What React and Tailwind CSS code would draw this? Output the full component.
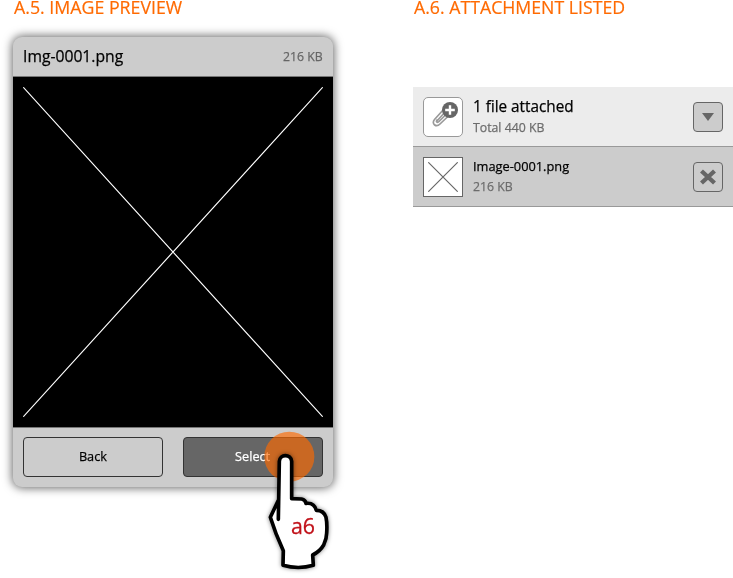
function CrossLines({ className, w, h }) {
  return (
    <svg className={className} viewBox={`0 0 ${w} ${h}`} fill="none" stroke="currentColor">
      <path d={`M0.3 0.3L${w - 0.3} ${h - 0.3}M${w - 0.3} 0.3L0.3 ${h - 0.3}`} strokeWidth="1.15" />
    </svg>
  );
}

function Title({ children, className }) {
  return (
    <h2 className="h-[37px] pl-px text-[19px] leading-[15px] text-[#ff6a00] [-webkit-text-stroke:0.2px]">
      <span className={`inline-block origin-left whitespace-nowrap ${className}`}>{children}</span>
    </h2>
  );
}

function PreviewPanel() {
  return (
    <div className="flex h-[450px] w-[320px] flex-col overflow-hidden rounded-[9px] bg-[#ccc] shadow-[0_0_10px_1px_rgba(0,0,0,0.6)]">
      <div className="flex h-10 items-center justify-between border-b border-[#777] px-[10px] pb-[2px]">
        <span className="inline-block origin-left scale-x-[0.98] text-[16px] leading-5 text-black">Img-0001.png</span>
        <span className="inline-block origin-right scale-x-[0.91] text-[13.5px] leading-5 text-[#666]">216 KB</span>
      </div>
      <div className="h-[350px] bg-black p-[10px] text-white">
        <CrossLines className="h-[330px] w-[300px]" w={300} h={330} />
      </div>
      <div className="flex flex-1 gap-5 border-t border-[#777] px-[10px] pt-[9px]">
        <button className="h-10 w-[140px] rounded-[4px] border border-[#333] pb-[2px] text-[13.5px] text-black">
          <span className="inline-block scale-x-[0.94]">Back</span>
        </button>
        <button className="h-10 w-[140px] rounded-[4px] border border-[#333] bg-[#666] pb-[2px] text-[13.5px] text-white">
          <span className="inline-block scale-x-[0.94]">Select</span>
        </button>
      </div>
    </div>
  );
}

function TapPointer() {
  return (
    <div className="absolute left-[250px] top-[430px] h-[148px] w-[90px]">
      <svg className="h-full w-full overflow-visible" viewBox="0 0 270 444">
        <circle cx="118" cy="80" r="75" fill="#ff6a00" fillOpacity="0.65" />
        <g className="drop-shadow-[0_0_7px_rgba(0,0,0,0.5)]">
          <path
            d="M85 268L88 94C89 71 123 71 125 94L125 206L155 207Q166 209 168 220Q193 217 199 241Q222 241 228 262Q232 281 230 309Q230 326 221 345Q210 364 188 375L190 406Q145 419 99 406L100 362Q76 311 61 262L84 213"
            fill="#fff"
            stroke="#000"
            strokeWidth="11"
            strokeLinejoin="round"
            strokeLinecap="round"
          />
        </g>
      </svg>
      <span className="absolute left-[41px] top-[81px] origin-left scale-x-[0.97] text-[22px] leading-7 text-[#c1121a] [-webkit-text-stroke:0.3px]">a6</span>
    </div>
  );
}

function ClipIcon() {
  return (
    <svg className="h-[38px] w-[38px]" viewBox="0 0 38 38" fill="none">
      <path
        d="M20 11L10.500 21.500C7 25.500 12 30 16 26L26.500 16M22 13L12.500 23.500M23 15.500L15 23.500C13.500 25 11.500 24 13 22"
        stroke="#999"
        strokeWidth="1.700"
        strokeLinecap="round"
      />
      <circle cx="26" cy="12" r="8" fill="#666" />
      <path d="M26 7.200V16.800M21.200 12H30.800" stroke="#fff" strokeWidth="2.400" />
    </svg>
  );
}

function AttachmentList() {
  return (
    <div className="mt-[50px] w-[320px] [-webkit-text-stroke:0.25px]">
      <div className="flex h-[60px] items-center border-b border-[#999] bg-[#ececec] px-[10px]">
        <div className="h-10 w-10 rounded-[5px] border border-[#999] bg-white">
          <ClipIcon />
        </div>
        <div className="ml-[10px] flex flex-1 flex-col">
          <span className="w-max origin-left scale-x-[0.955] text-[16px] leading-[21px] text-black">1 file attached</span>
          <span className="w-max origin-left scale-x-[0.91] text-[13.5px] leading-5 text-[#6c6c6c]">Total 440 KB</span>
        </div>
        <button className="flex h-[30px] w-[30px] items-center justify-center rounded-[4px] border border-[#666] bg-[#ccc]">
          <svg className="h-2 w-3" viewBox="0 0 12 8"><path d="M0 0H12L6 8Z" fill="#666" /></svg>
        </button>
      </div>
      <div className="flex h-[60px] items-center border-b border-[#999] bg-[#ccc] px-[10px]">
        <div className="flex h-10 w-10 items-center justify-center border border-[#666] bg-white text-[#666]">
          <CrossLines className="h-[30px] w-[30px]" w={30} h={30} />
        </div>
        <div className="ml-[10px] flex flex-1 flex-col pb-[2px]">
          <span className="w-max origin-left scale-x-[0.985] text-[13px] leading-5 text-black">Image-0001.png</span>
          <span className="w-max origin-left scale-x-[0.91] text-[13.5px] leading-5 text-[#6c6c6c]">216 KB</span>
        </div>
        <button className="flex h-[30px] w-[30px] items-center justify-center rounded-[4px] border border-[#666]">
          <svg className="h-4 w-4" viewBox="0 0 16 16"><path d="M1.500 2L14.500 14M14.500 2L1.500 14" stroke="#666" strokeWidth="4.300" /></svg>
        </button>
      </div>
    </div>
  );
}

export default function App() {
  return (
    <div className="relative flex h-[578px] w-[733px] gap-20 overflow-hidden bg-white pl-[13px] font-['Open_Sans','Noto_Sans',sans-serif]">
      <section className="w-[320px]">
        <Title className="scale-x-[0.935]">A.5. IMAGE PREVIEW</Title>
        <div className="[-webkit-text-stroke:0.25px]">
          <PreviewPanel />
        </div>
      </section>
      <section className="w-[320px]">
        <Title className="scale-x-[0.932]">A.6. ATTACHMENT LISTED</Title>
        <AttachmentList />
      </section>
      <TapPointer />
    </div>
  );
}
